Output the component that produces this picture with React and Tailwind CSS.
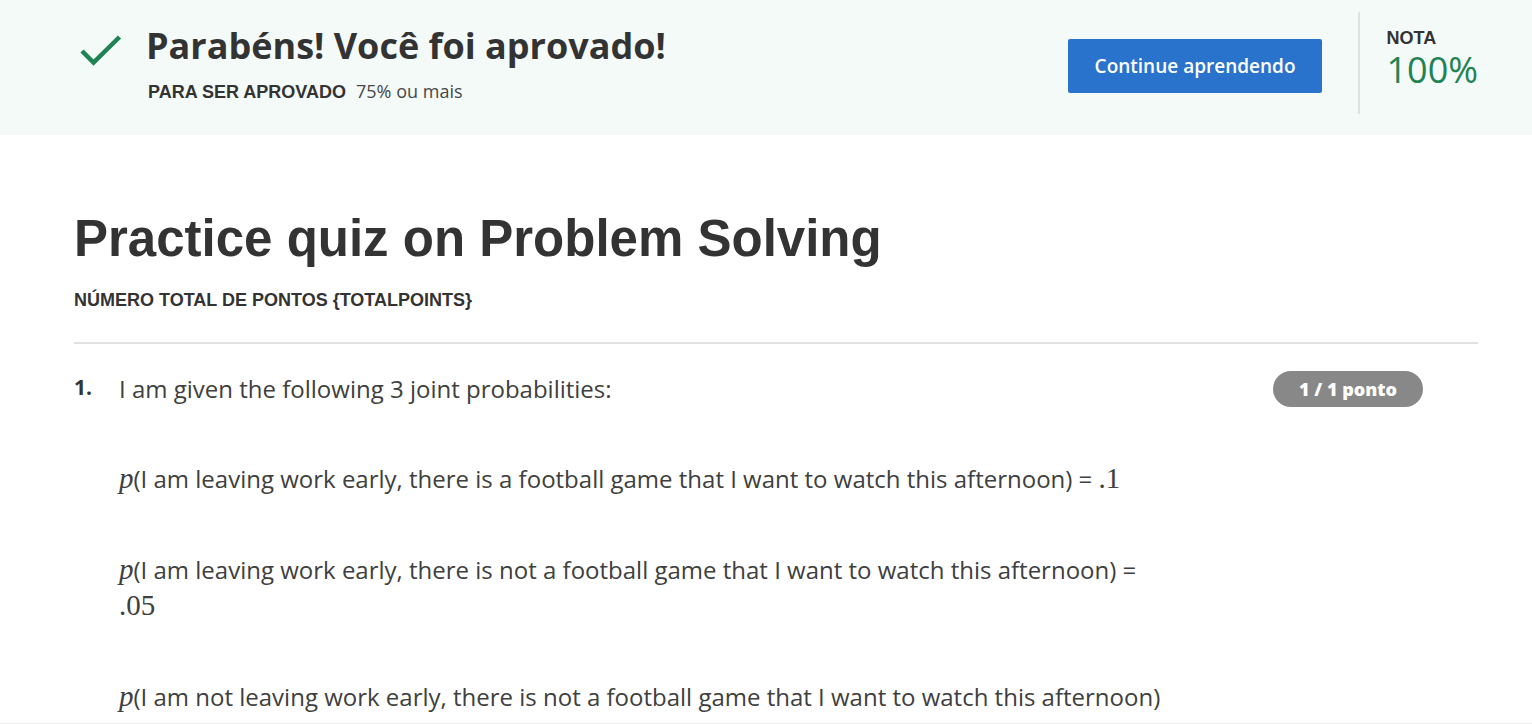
function MathText({ children }) {
  return <span className="font-['Liberation_Serif',serif] text-[29px] leading-none">{children}</span>;
}

function Variable({ name }) {
  return <var className="font-['Liberation_Serif',serif] text-[29px] leading-none italic">{name}</var>;
}

function ResultBanner() {
  return (
    <header className="flex items-start justify-between bg-[#f4faf8] pt-3 pr-[54px] pb-[21px] pl-20">
      <div className="flex items-start gap-6 pt-3">
        <svg className="mt-2 h-10 w-[42px] shrink-0" viewBox="0 0 42 40" fill="none" aria-hidden="true">
          <path d="M2 19 13.500 30.500 39.500 5" stroke="#1f8354" strokeWidth="4.5" />
        </svg>
        <div>
          <h2 className="text-4xl leading-11 font-bold">Parabéns! Você foi aprovado!</h2>
          <p className="flex items-baseline gap-2.5 pt-[11px] pl-0.5 text-lg leading-6">
            <strong className="font-['Liberation_Sans',Arial,sans-serif] font-bold">PARA SER APROVADO</strong>
            <span className="text-[#484848]">75% ou mais</span>
          </p>
        </div>
      </div>
      <div className="flex items-start">
        <button type="button" className="mt-[27px] mr-9 h-[54px] rounded-xs bg-[#2a73cc] px-[27px] text-[19px] font-semibold text-white">
          Continue aprendendo
        </button>
        <div className="h-[102px] border-l-2 border-[#dfe0e0] pt-3 pl-[26px]">
          <p className="font-['Liberation_Sans',Arial,sans-serif] text-lg leading-7 font-bold">NOTA</p>
          <p className="text-4xl leading-9 text-[#1f8354]">100%</p>
        </div>
      </div>
    </header>
  );
}

export default function App() {
  return (
    <div className="border-b border-[#ebebeb] bg-white font-['Open_Sans',sans-serif] text-[#333333]">
      <ResultBanner />
      <main className="pt-[72px] pr-[54px] pb-2 pl-[74px]">
        <h1 className="font-['Liberation_Sans',Arial,sans-serif] text-[51px] leading-16 font-bold">
          Practice quiz on Problem Solving
        </h1>
        <p className="pt-[17px] font-['Liberation_Sans',Arial,sans-serif] text-lg leading-6 font-bold">
          {'NÚMERO TOTAL DE PONTOS {TOTALPOINTS}'}
        </p>
        <section className="mt-[30px] flex items-start border-t-2 border-[#e1e1e1] pt-[27px]">
          <span className="w-[45px] shrink-0 text-[21px] leading-8 font-bold">1.</span>
          <div className="flex-1 text-2xl leading-9 text-[#404040]">
            <p>I am given the following 3 joint probabilities:</p>
            <p className="pt-[54px]">
              <Variable name="p" />(I am leaving work early, there is a football game that I want to watch this afternoon) ={' '}
              <MathText>.1</MathText>
            </p>
            <p className="pt-[55px]">
              <Variable name="p" />(I am leaving work early, there is not a football game that I want to watch this afternoon) ={' '}
              <MathText>.05</MathText>
            </p>
            <p className="pt-[55px]">
              <Variable name="p" />(I am not leaving work early, there is not a football game that I want to watch this afternoon)
            </p>
          </div>
          <span className="mr-[55px] ml-[104px] h-9 shrink-0 rounded-full bg-[#888888] px-[26px] text-lg leading-9 font-extrabold text-white">
            1 / 1 ponto
          </span>
        </section>
      </main>
    </div>
  );
}
